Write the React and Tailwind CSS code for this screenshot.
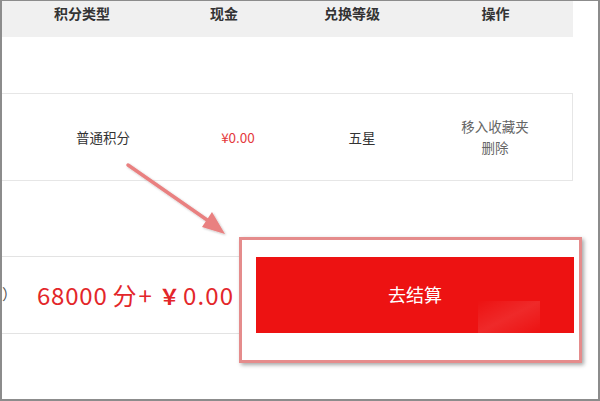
import React from "react";

export default function App() {
  const font = { fontFamily: '"Noto Sans CJK SC", "Noto Sans", sans-serif' };
  return (
    <div
      className="relative w-[600px] h-[401px] overflow-hidden bg-white border-x-2 border-b-2 border-t border-[#8c8c8c]"
      style={font}
    >
      {/* header */}
      <div className="flex w-[571px] h-[36px] bg-[#f0f0f0] text-[14px] font-bold text-[#333] leading-[18px] pt-[3px]">
        <div className="w-[160px] text-center">积分类型</div>
        <div className="w-[124px] text-center">现金</div>
        <div className="w-[132px] text-center">兑换等级</div>
        <div className="w-[155px] text-center">操作</div>
      </div>

      {/* item row */}
      <div className="mt-[56px] flex items-center w-[571px] h-[88px] border border-l-0 border-[#e6e6e6] text-[13.5px] text-[#333]">
        <div className="w-[202px] text-center">普通积分</div>
        <div className="w-[68px] text-center text-[#e4393c]">¥0.00</div>
        <div className="w-[180px] text-center">五星</div>
        <div className="w-[86px] text-center text-[#666] leading-[21px]">
          <div>移入收藏夹</div>
          <div>删除</div>
        </div>
      </div>

      {/* bottom bar */}
      <div className="mt-[56px] flex items-start">
        <div className="mt-[19px] w-[237px] h-[78px] border-y border-[#e3e3e3] flex items-center">
          <span className="inline-block text-[15px] text-[#555] w-[35px] -mt-[2px]">）</span>
          <span className="flex items-center text-[24px] text-[#e3262a] whitespace-nowrap leading-none">
            <span className="tracking-[0.8px]">68000</span>
            <span className="ml-[5px]">分</span>
            <span className="ml-[2px]">+</span>
            <span className="ml-[7px] font-bold text-[21px]">￥</span>
            <span className="ml-[3px] tracking-[1.2px]">0.00</span>
          </span>
        </div>
        <div className="w-[343px] h-[126px] border-[3px] border-[#e58c8c] bg-white shadow-[2px_2px_4px_rgba(0,0,0,0.35)] pl-[14px] pr-[5px] pt-[17px]">
          <button className="relative w-[318px] h-[76px] bg-[#ed1212] text-white text-[18px] flex items-center justify-center overflow-hidden">
            <span className="-mt-[2px]">去结算</span>
            <span className="absolute left-[222px] top-[44px] w-[62px] h-[32px] bg-gradient-to-br from-white/0 via-white/10 to-white/0" />
          </button>
        </div>
      </div>

      {/* annotation arrow */}
      <svg
        className="absolute left-0 top-0 pointer-events-none"
        width="600"
        height="401"
        viewBox="0 0 600 401"
      >
        <defs>
          <filter id="sh" x="-20%" y="-20%" width="140%" height="140%">
            <feDropShadow dx="1" dy="1" stdDeviation="1" floodColor="#000" floodOpacity="0.25" />
          </filter>
        </defs>
        <g filter="url(#sh)">
          <line x1="126" y1="164" x2="208" y2="221" stroke="#e98080" strokeWidth="3.5" strokeLinecap="round" />
          <polygon points="223,233 200,226 210,211" fill="#e98080" />
        </g>
      </svg>
    </div>
  );
}
